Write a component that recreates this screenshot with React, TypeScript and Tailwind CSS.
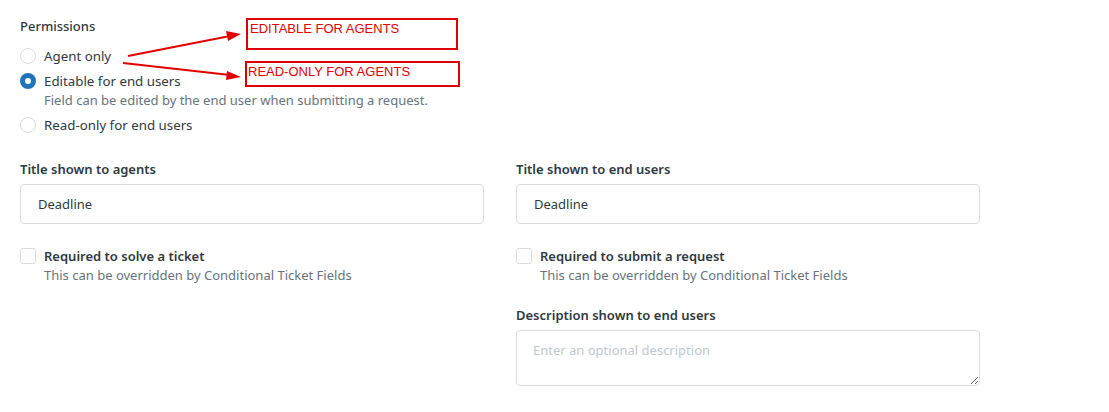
import { useState } from 'react';

function Radio({ checked, label, hint }: { checked?: boolean; label: string; hint?: string }) {
  return (
    <div className="flex items-start gap-2">
      <span
        className={
          checked
            ? 'mt-[2px] flex h-4 w-4 shrink-0 items-center justify-center rounded-full bg-[#1f73b7]'
            : 'mt-[2px] h-4 w-4 shrink-0 rounded-full border border-[#d8dcde] bg-white'
        }
      >
        {checked ? <span className="h-[6px] w-[6px] rounded-full bg-white" /> : null}
      </span>
      <div>
        <p className="text-[13.3px] leading-5 text-[#2f3941]">{label}</p>
        {hint ? <p className="text-[13px] leading-[19px] text-[#68737d]">{hint}</p> : null}
      </div>
    </div>
  );
}

function Check({ label, hint }: { label: string; hint: string }) {
  return (
    <div className="flex items-start gap-2">
      <span className="mt-[2px] h-4 w-4 shrink-0 rounded-[3px] border border-[#d8dcde] bg-white" />
      <div>
        <p className="text-[13px] font-semibold leading-5 text-[#2f3941]">{label}</p>
        <p className="text-[13px] leading-[18px] text-[#68737d]">{hint}</p>
      </div>
    </div>
  );
}

export default function App() {
  const [agentTitle, setAgentTitle] = useState('Deadline');
  const [userTitle, setUserTitle] = useState('Deadline');

  return (
    <div className="relative h-[412px] w-[1109px] bg-white font-['Noto_Sans',sans-serif]">
      <div className="px-5 pt-[16px]">
        <p className="text-[13px] font-medium leading-5 text-[#2f3941]">Permissions</p>
        <div className="mt-[10px] flex flex-col gap-[5px]">
          <Radio label="Agent only" />
          <Radio checked label="Editable for end users" hint="Field can be edited by the end user when submitting a request." />
          <Radio label="Read-only for end users" />
        </div>

        <div className="mt-[24px] grid w-[960px] grid-cols-2 gap-x-8">
          <div>
            <p className="text-[13px] font-semibold leading-5 text-[#2f3941]">Title shown to agents</p>
            <input
              value={agentTitle}
              onChange={(e) => setAgentTitle(e.target.value)}
              className="mt-[5px] h-10 w-[464px] rounded-[4px] border border-[#d8dcde] px-[17px] text-[13px] text-[#2f3941] outline-none"
            />
            <div className="mt-[22px]">
              <Check label="Required to solve a ticket" hint="This can be overridden by Conditional Ticket Fields" />
            </div>
          </div>
          <div>
            <p className="text-[13px] font-semibold leading-5 text-[#2f3941]">Title shown to end users</p>
            <input
              value={userTitle}
              onChange={(e) => setUserTitle(e.target.value)}
              className="mt-[5px] h-10 w-[464px] rounded-[4px] border border-[#d8dcde] px-[17px] text-[13px] text-[#2f3941] outline-none"
            />
            <div className="mt-[22px]">
              <Check label="Required to submit a request" hint="This can be overridden by Conditional Ticket Fields" />
            </div>
            <p className="mt-[21px] text-[13px] font-semibold leading-5 text-[#2f3941]">Description shown to end users</p>
            <textarea
              placeholder="Enter an optional description"
              className="mt-[5px] block h-14 w-[464px] resize-y rounded-[4px] border border-[#d8dcde] px-4 py-[10px] text-[13px] text-[#2f3941] outline-none placeholder:text-[#c2c8cc]"
            />
          </div>
        </div>
      </div>

      {/* annotations */}
      <div className="absolute left-[246px] top-[18px] h-[32px] w-[212px] border-2 border-[#e00000] px-[2px] font-['Liberation_Sans',sans-serif] text-[13px] leading-[18px] text-[#e00000]">
        EDITABLE FOR AGENTS
      </div>
      <div className="absolute left-[245px] top-[61px] h-[26px] w-[215px] border-2 border-[#e00000] px-[1px] font-['Liberation_Sans',sans-serif] text-[13px] leading-[18px] text-[#e00000]">
        READ-ONLY FOR AGENTS
      </div>
      <svg className="pointer-events-none absolute left-0 top-0" width="1109" height="412">
        <g stroke="#e00000" strokeWidth="2" fill="none">
          <line x1="128" y1="56" x2="230" y2="36" />
          <line x1="123" y1="63" x2="230" y2="75" />
        </g>
        <polygon points="241,34 226,31 228,41" fill="#e00000" />
        <polygon points="241,77 227,71 226,80" fill="#e00000" />
      </svg>
    </div>
  );
}
